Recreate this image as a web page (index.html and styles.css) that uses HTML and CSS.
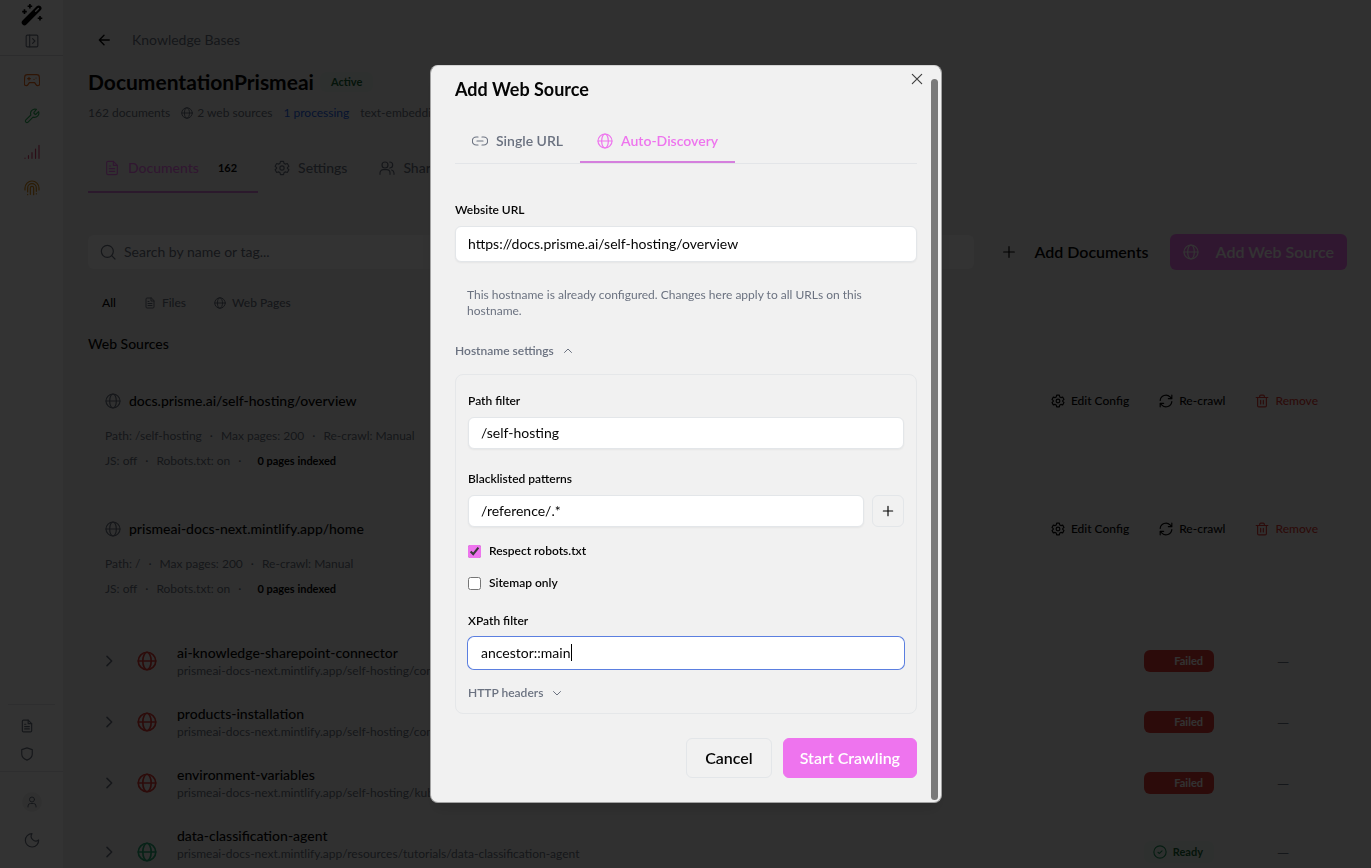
FILE: index.html
```html
<!DOCTYPE html>
<html lang="en">
<head>
<meta charset="utf-8">
<meta name="viewport" content="width=device-width, initial-scale=1">
<title>DocumentationPrismeai – Knowledge Bases</title>
<link rel="stylesheet" href="styles.css">
</head>
<body>
<svg class="sprite" aria-hidden="true">
  <symbol id="globe" viewBox="0 0 24 24"><circle cx="12" cy="12" r="10.5"/><ellipse cx="12" cy="12" rx="5" ry="10.5"/><path d="M1.500 12h21"/></symbol>
  <symbol id="file" viewBox="0 0 24 24"><path d="M14 2H6a2 2 0 0 0-2 2v16a2 2 0 0 0 2 2h12a2 2 0 0 0 2-2V8z"/><path d="M14 2v6h6M8 9h2M8 13h8M8 17h8"/></symbol>
  <symbol id="gear" viewBox="0 0 24 24"><path d="M9.700 2h4.600l.7 3 2 1.200 3-.9 2.300 4-2.200 2.100v1.200l2.200 2.100-2.300 4-3-.9-2 1.200-.7 3H9.700L9 19l-2-1.200-3 .9-2.300-4 2.200-2.100v-1.200L1.700 9.300 4 5.300l3 .9L9 5z"/><circle cx="12" cy="12" r="3.200"/></symbol>
  <symbol id="users" viewBox="0 0 24 24"><circle cx="9" cy="7.500" r="4.500"/><path d="M1.500 21.500v-2a5 5 0 0 1 5-5h5a5 5 0 0 1 5 5v2M16 3a4.500 4.500 0 0 1 0 9M19 15a5 5 0 0 1 3.500 4.500v2"/></symbol>
  <symbol id="refresh" viewBox="0 0 24 24"><path d="M2 11a10 10 0 0 1 17-6l3 3M22 2v6h-6M22 13a10 10 0 0 1-17 6l-3-3M2 22v-6h6"/></symbol>
  <symbol id="trash" viewBox="0 0 24 24"><path d="M2 6h20M4.500 6v14a2 2 0 0 0 2 2h11a2 2 0 0 0 2-2V6M8 6V4a2 2 0 0 1 2-2h4a2 2 0 0 1 2 2v2M9.700 11v6M14.300 11v6"/></symbol>
  <symbol id="plus" viewBox="0 0 24 24"><path d="M12 4v16M4 12h16"/></symbol>
  <symbol id="chevron" viewBox="0 0 24 24"><path d="M9 5l7 7-7 7"/></symbol>
</svg>

<div class="app">
  <aside class="sidebar">
    <div class="side-head">
      <svg class="logo" viewBox="0 0 24 24" aria-label="Prisme.ai"><path d="M3.800 20.200L19.300 4.700" stroke="#000" stroke-width="6" stroke-linecap="round"/><path d="M16 8l3-3" stroke="#fff" stroke-width="1.600" stroke-linecap="round"/><path d="M9.700 0v5M7.200 2.500h5M3.800 5.800v5M1.300 8.300h5M20.700 13v5M18.200 15.500h5" stroke="#000" stroke-width="1.800"/></svg>
      <button class="icon-btn muted" type="button" aria-label="Expand sidebar"><svg class="ic s14" viewBox="0 0 24 24"><rect x="2" y="2" width="20" height="20" rx="2"/><path d="M8 2v20M13 8l4 4-4 4"/></svg></button>
    </div>
    <nav class="side-nav" aria-label="Products">
      <a href="#" class="c-orange" aria-label="Agents"><svg class="ic s16" viewBox="0 0 24 24"><path d="M5 4h14a4 4 0 0 1 4 4l.5 9a3 3 0 0 1-5.500 2L16 16H8l-2 3a3 3 0 0 1-5.500-2L1 8a4 4 0 0 1 4-4zM5.500 10h4M7.500 8v4M15 11h.1M18 9h.1"/></svg></a>
      <a href="#" class="c-green" aria-label="Builder"><svg class="ic s16" viewBox="0 0 24 24"><path d="M15 6.500a1 1 0 0 0 0 1.400L16.500 9.400a1 1 0 0 0 1.400 0l4-4a6.500 6.500 0 0 1-8.400 8.300l-7.400 7.500a2.300 2.300 0 0 1-3.300-3.300l7.500-7.400a6.500 6.500 0 0 1 8.300-8.400z"/></svg></a>
      <a href="#" class="c-pink" aria-label="Insights"><svg class="ic s16" viewBox="0 0 24 24"><path d="M1.500 21v.5M6.700 17.500v4M12 13v8.500M17.300 7.500v14M22.500 2v19.500"/></svg></a>
      <a href="#" class="c-amber" aria-label="Governance"><svg class="ic s16" viewBox="0 0 24 24"><path d="M1.500 15v-3a10.500 10.500 0 0 1 21 0v3M5.500 18v-6a6.500 6.500 0 0 1 13 0v5M9.500 21.500V12a2.500 2.500 0 0 1 5 0v10M5.500 21.500v.5M18.500 20.500v.5"/></svg></a>
    </nav>
    <div class="side-links">
      <a href="#" aria-label="Documentation"><svg class="ic s14"><use href="#file"/></svg></a>
      <a href="#" aria-label="Privacy"><svg class="ic s14" viewBox="0 0 24 24"><path d="M12 1.500l9 3v8c0 5-4 8-9 10-5-2-9-5-9-10v-8z"/></svg></a>
    </div>
    <div class="side-foot">
      <button class="avatar" type="button" aria-label="Account"><svg class="ic s12" viewBox="0 0 24 24"><circle cx="12" cy="7" r="5"/><path d="M4 22v-2a5 5 0 0 1 5-5h6a5 5 0 0 1 5 5v2"/></svg></button>
      <button class="icon-btn" type="button" aria-label="Dark mode"><svg class="ic s16" viewBox="0 0 24 24"><path d="M12 2.500a7 7 0 0 0 10 9.500A10 10 0 1 1 12 2.500z"/></svg></button>
    </div>
  </aside>

  <main class="main">
    <div class="crumb"><button class="back" type="button" aria-label="Back"><svg class="ic s14 bold" viewBox="0 0 24 24"><path d="M21 12H4M12 4l-8 8 8 8"/></svg></button><span>Knowledge Bases</span></div>
    <div class="head"><h1>DocumentationPrismeai</h1><span class="badge badge-active">Active</span></div>
    <div class="facts"><span>162 documents</span><span class="with-icon"><svg class="ic s12"><use href="#globe"/></svg>2 web sources</span><span class="blue">1 processing</span><span>text-embedding-ada</span></div>

    <div class="tabs main-tabs" role="tablist">
      <button class="tab tab-on" role="tab" type="button"><svg class="ic s16"><use href="#file"/></svg>Documents<span class="count">162</span></button>
      <button class="tab" role="tab" type="button"><svg class="ic s16"><use href="#gear"/></svg>Settings</button>
      <button class="tab" role="tab" type="button"><svg class="ic s16"><use href="#users"/></svg>Share</button>
    </div>

    <div class="toolbar">
      <label class="search"><svg class="ic s16" viewBox="0 0 24 24"><circle cx="11" cy="11" r="9"/><path d="M17.500 17.500L22.500 22.500"/></svg><input type="search" placeholder="Search by name or tag..." aria-label="Search by name or tag"></label>
      <button class="btn-tool" type="button"><svg class="ic s16"><use href="#plus"/></svg>Add Documents</button>
      <button class="btn-tool btn-pink" type="button"><svg class="ic s16"><use href="#globe"/></svg>Add Web Source</button>
    </div>

    <div class="filters">
      <button class="on" type="button">All</button>
      <button type="button"><svg class="ic s12"><use href="#file"/></svg>Files</button>
      <button type="button"><svg class="ic s12"><use href="#globe"/></svg>Web Pages</button>
    </div>

    <h2>Web Sources</h2>
    <section class="cards">
      <article class="card">
        <div class="card-top">
          <h3><svg class="ic s16"><use href="#globe"/></svg>docs.prisme.ai/self-hosting/overview</h3>
          <div class="card-actions">
            <button type="button"><svg class="ic s14"><use href="#gear"/></svg>Edit Config</button>
            <button type="button"><svg class="ic s14"><use href="#refresh"/></svg>Re-crawl</button>
            <button class="danger" type="button"><svg class="ic s14"><use href="#trash"/></svg>Remove</button>
          </div>
        </div>
        <div class="meta"><span>Path: /self-hosting</span><span>·</span><span>Max pages: 200</span><span>·</span><span>Re-crawl: Manual</span></div>
        <div class="meta"><span>JS: off</span><span>·</span><span>Robots.txt: on</span><span>·</span><span class="indexed">0 pages indexed</span></div>
      </article>
      <article class="card">
        <div class="card-top">
          <h3><svg class="ic s16"><use href="#globe"/></svg>prismeai-docs-next.mintlify.app/home</h3>
          <div class="card-actions">
            <button type="button"><svg class="ic s14"><use href="#gear"/></svg>Edit Config</button>
            <button type="button"><svg class="ic s14"><use href="#refresh"/></svg>Re-crawl</button>
            <button class="danger" type="button"><svg class="ic s14"><use href="#trash"/></svg>Remove</button>
          </div>
        </div>
        <div class="meta"><span>Path: /</span><span>·</span><span>Max pages: 200</span><span>·</span><span>Re-crawl: Manual</span></div>
        <div class="meta"><span>JS: off</span><span>·</span><span>Robots.txt: on</span><span>·</span><span class="indexed">0 pages indexed</span></div>
      </article>
    </section>

    <ul class="docs">
      <li class="doc"><svg class="ic s16 caret"><use href="#chevron"/></svg><svg class="ic s20 red"><use href="#globe"/></svg><div class="doc-text"><h4>ai-knowledge-sharepoint-connector</h4><p>prismeai-docs-next.mintlify.app/self-hosting/connectors</p></div><span class="badge status failed">Failed</span><span class="dash">—</span></li>
      <li class="doc"><svg class="ic s16 caret"><use href="#chevron"/></svg><svg class="ic s20 red"><use href="#globe"/></svg><div class="doc-text"><h4>products-installation</h4><p>prismeai-docs-next.mintlify.app/self-hosting/configuration</p></div><span class="badge status failed">Failed</span><span class="dash">—</span></li>
      <li class="doc"><svg class="ic s16 caret"><use href="#chevron"/></svg><svg class="ic s20 red"><use href="#globe"/></svg><div class="doc-text"><h4>environment-variables</h4><p>prismeai-docs-next.mintlify.app/self-hosting/kubernetes</p></div><span class="badge status failed">Failed</span><span class="dash">—</span></li>
      <li class="doc doc-tall"><svg class="ic s16 caret"><use href="#chevron"/></svg><svg class="ic s20 green"><use href="#globe"/></svg><div class="doc-text"><h4>data-classification-agent</h4><p>prismeai-docs-next.mintlify.app/resources/tutorials/data-classification-agent</p></div><span class="badge status ready"><svg class="ic s14" viewBox="0 0 24 24"><circle cx="12" cy="12" r="10.500"/><path d="M8.500 12.500l2.500 2 4.500-4.500"/></svg>Ready</span><span class="dash">—</span></li>
    </ul>
  </main>
</div>

<div class="overlay">
  <form class="modal" role="dialog" aria-modal="true" aria-labelledby="dlg-title">
    <button class="close" type="button" aria-label="Close"><svg class="ic s16" viewBox="0 0 24 24"><path d="M5 5l14 14M19 5L5 19"/></svg></button>
    <span class="thumb"></span>
    <h2 class="modal-title" id="dlg-title">Add Web Source</h2>
    <div class="tabs modal-tabs" role="tablist">
      <button class="tab" role="tab" type="button"><svg class="ic s16" viewBox="0 0 24 24"><path d="M9 6H6.500a6 6 0 0 0 0 12H9M15 6h2.500a6 6 0 0 1 0 12H15M7.500 12h9"/></svg>Single URL</button>
      <button class="tab tab-on" role="tab" type="button"><svg class="ic s16"><use href="#globe"/></svg>Auto-Discovery</button>
    </div>
    <label class="label first" for="url">Website URL</label>
    <input class="field field-lg" id="url" type="text" value="https://docs.prisme.ai/self-hosting/overview">
    <p class="notice">This hostname is already configured. Changes here apply to all URLs on this hostname.</p>
    <button class="toggle" type="button" aria-expanded="true">Hostname settings<svg class="ic s12 up"><use href="#chevron"/></svg></button>
    <div class="panel">
      <label class="label" for="path">Path filter</label>
      <input class="field" id="path" type="text" value="/self-hosting">
      <label class="label spaced" for="black">Blacklisted patterns</label>
      <div class="pattern"><input class="field" id="black" type="text" value="/reference/.*"><button class="add" type="button" aria-label="Add pattern"><svg class="ic s14"><use href="#plus"/></svg></button></div>
      <label class="check"><input type="checkbox" checked>Respect robots.txt</label>
      <label class="check"><input type="checkbox">Sitemap only</label>
      <label class="label spaced" for="xpath">XPath filter</label>
      <div class="focus-wrap"><input class="field focused" id="xpath" type="text" value="ancestor::main"><span class="text-caret"></span></div>
      <button class="toggle" type="button" aria-expanded="false">HTTP headers<svg class="ic s12 down"><use href="#chevron"/></svg></button>
    </div>
    <div class="modal-foot"><button class="btn" type="button">Cancel</button><button class="btn btn-primary" type="submit">Start Crawling</button></div>
  </form>
</div>
</body>
</html>
```
FILE: styles.css
```css
* { box-sizing: border-box; }
html, body { height: 100%; }
body { margin: 0; font: 400 14px/20px Lato, "Liberation Sans", sans-serif; color: #050505; background: #f1f1f1; overflow: hidden; }
h1, h2, h3, h4, p, ul { margin: 0; padding: 0; }
button { font: inherit; color: inherit; background: none; border: 0; padding: 0; display: inline-flex; align-items: center; justify-content: center; cursor: pointer; white-space: nowrap; }
input { font: inherit; color: inherit; }
a { color: inherit; display: flex; }

.sprite { display: none; }
.ic { fill: none; stroke: currentColor; stroke-width: 2; stroke-linecap: round; stroke-linejoin: round; flex: none; }
.s12 { width: 12px; height: 12px; }
.s14 { width: 14px; height: 14px; }
.s16 { width: 16px; height: 16px; stroke-width: 1.8; }
.s20 { width: 20px; height: 20px; }
.bold { stroke-width: 2.4; }

.app { display: flex; height: 100vh; overflow: hidden; }
.sidebar { width: 63px; flex: none; display: flex; flex-direction: column; background: #fff; color: #6b7280; }
.side-head { display: flex; flex-direction: column; align-items: center; gap: 8px; padding: 4px 0 7px; border-bottom: 1px solid #d9dce1; }
.logo { width: 22px; height: 22px; fill: none; }
.side-nav { flex: 1; display: flex; flex-direction: column; align-items: center; gap: 20px; padding-top: 16px; }
.side-links { margin: 0 8px; display: flex; flex-direction: column; gap: 14px; padding: 14px 12px 10px; border-top: 1px solid #e5e7eb; }
.side-foot { display: flex; flex-direction: column; align-items: center; gap: 20px; padding: 20px 0; border-top: 1px solid #e5e7eb; }
.avatar { width: 20px; height: 20px; border-radius: 50%; background: #f1f1f1; }
.c-orange { color: #ea6a1c; }
.c-green { color: #2fae5c; }
.c-pink { color: #d8416f; }
.c-amber { color: #d98a14; }

.main { flex: 1; min-width: 0; padding: 30px 24px 0 25px; }
.crumb { display: flex; align-items: center; gap: 12px; color: #6b7280; }
.back { width: 32px; color: #050505; }
.head { display: flex; align-items: center; gap: 6px; margin-top: 18px; }
h1 { font-size: 21px; line-height: 28px; font-weight: 700; }
.badge { display: inline-flex; align-items: center; font-size: 11px; line-height: 20px; font-weight: 700; border-radius: 6px; padding: 0 11px; }
.badge-active { color: #166534; background: #e6f0ea; }
.facts { display: flex; gap: 11px; margin-top: 9px; font-size: 12px; line-height: 16px; color: #6b7280; white-space: nowrap; }
.with-icon { display: inline-flex; align-items: center; gap: 4px; }
.blue { color: #2563eb; }

.tabs { display: flex; }
.tab { position: relative; gap: 8px; padding: 0 17px; font-weight: 600; color: #6b7280; }
.tab-on { color: #ee74ee; }
.tab-on::after { content: ""; position: absolute; left: 0; right: 0; bottom: 0; height: 2px; background: #d57fdd; }
.main-tabs { height: 48px; margin-top: 24px; }
.main-tabs .tab { padding: 0 16px 2px; font-weight: 500; }
.count { font-size: 11px; font-weight: 700; color: #050505; padding: 0 5px 0 11px; }

.toolbar { display: flex; gap: 8px; align-items: center; margin-top: 41px; }
.search { flex: 1; height: 34px; display: flex; align-items: center; gap: 8px; padding: 0 12px; background: #fff; border-radius: 6px; color: #6b7280; }
.search input { flex: 1; border: 0; outline: 0; background: none; padding: 0; }
.search input::placeholder { color: #6b7280; opacity: 1; }
.btn-tool { height: 36px; padding: 0 13px 0 19px; gap: 17px; font-size: 16px; font-weight: 600; border-radius: 6px; }
.btn-pink { padding: 0 13px; background: #ee74ee; color: #fff; }

.filters { display: flex; margin-top: 25px; font-size: 12px; line-height: 16px; font-weight: 500; color: #6b7280; }
.filters button { padding: 0 14px; gap: 6px; }
.filters .on { color: #050505; }
.main h2 { margin-top: 23px; font-size: 14px; line-height: 20px; font-weight: 500; }

.cards { display: flex; flex-direction: column; gap: 16px; margin-top: 20px; }
.card { padding: 17px; }
.card-top { display: flex; justify-content: space-between; align-items: center; margin-bottom: 17px; }
h3 { display: flex; align-items: center; gap: 8px; font-size: 14px; line-height: 20px; font-weight: 500; }
h3 .ic { color: #6b7280; }
.card-actions { display: flex; gap: 6px; font-size: 12px; line-height: 16px; font-weight: 500; }
.card-actions button { padding: 0 12px; gap: 6px; }
.danger, .red { color: #dc3a34; }
.green { color: #26a873; }
.meta { display: flex; gap: 8px; font-size: 12px; line-height: 16px; color: #6b7280; }
.meta + .meta { margin-top: 9px; }
.indexed { font-size: 11px; font-weight: 700; color: #050505; padding-left: 8px; }

.docs { list-style: none; margin-top: 17px; }
.doc { display: flex; align-items: center; padding: 12px 0 12px 13px; border-bottom: 1px solid transparent; }
.caret { margin-right: 20px; color: #6b7280; stroke-width: 2.4; }
.doc-text { flex: 1; min-width: 0; margin-left: 20px; }
h4 { font-size: 14px; line-height: 20px; font-weight: 500; }
.doc-text p { font-size: 12px; line-height: 16px; color: #6b7280; }
.doc-tall .doc-text { padding-bottom: 16px; }
.status { width: 70px; line-height: 22px; justify-content: flex-end; gap: 6px; }
.failed { background: #dc3a34; color: #fafafa; }
.ready { background: #e6f0ea; color: #166534; }
.ready .ic { color: #22915c; }
.dash { width: 133px; padding-left: 5px; text-align: center; font-size: 16px; color: #6b7280; }

.overlay { position: fixed; inset: 0; padding-left: 1px; display: flex; align-items: center; justify-content: center; background: rgba(0, 0, 0, .8); }
.modal { position: relative; width: 512px; max-width: 100%; padding: 14px 24px 24px; background: #f1f1f1; border: 1px solid #a3a3a3; border-top-color: #d4d4d4; border-radius: 8px; box-shadow: 0 10px 15px rgba(0, 0, 0, .1); }
.close { position: absolute; top: 5px; right: 16px; color: #404040; }
.thumb { position: absolute; top: 13px; right: 3px; bottom: 2px; width: 7px; border-radius: 4px; background: #7a7a7a; }
.modal-title { font-size: 18px; line-height: 18px; font-weight: 700; }
.modal-tabs { height: 45px; margin-top: 21px; border-bottom: 1px solid #e3e5e8; }
.label { display: block; font-size: 12px; line-height: 16px; font-weight: 600; margin-bottom: 8px; }
.first { margin-top: 38px; }
.spaced { margin-top: 22px; }
.field { display: block; width: 100%; height: 32px; padding: 0 12px 2px; background: #fff; border: 1px solid #e3e6e9; border-radius: 6px; outline: 0; box-shadow: 0 1px 2px rgba(0, 0, 0, .05); }
.field-lg { height: 36px; }
.notice { margin-top: 25px; padding: 0 12px; font-size: 12px; line-height: 16px; color: #6b7280; }
.toggle { display: flex; gap: 8px; margin-top: 24px; font-size: 12px; line-height: 16px; font-weight: 600; color: #6b7280; }
.up { transform: rotate(-90deg); }
.down { transform: rotate(90deg); }
.panel { margin-top: 15px; padding: 18px 12px 12px; border: 1px solid #e5e7e9; border-radius: 8px; }
.pattern { display: flex; gap: 8px; }
.pattern .field { flex: 1; min-width: 0; }
.add { width: 32px; height: 32px; border: 1px solid #e3e6e9; border-radius: 6px; }
.check { display: flex; align-items: center; gap: 8px; margin-top: 16px; font-size: 12px; line-height: 16px; font-weight: 600; }
.check input { width: 13px; height: 13px; margin: 0; accent-color: #ee74ee; }
.focus-wrap { position: relative; }
.focused { border-color: #fff; box-shadow: 0 0 0 1px #5b7fe0; }
.text-caret { position: absolute; left: 103px; top: 7px; width: 1px; height: 17px; background: #000; }
.panel .toggle { margin-top: 16px; }
.modal-foot { display: flex; justify-content: flex-end; gap: 11px; margin-top: 24px; }
.btn { height: 40px; padding: 0 18px; border: 1px solid #e3e6e9; border-radius: 6px; font-size: 16px; font-weight: 600; }
.btn-primary { padding: 0 16px; border-color: #ee74ee; background: #ee74ee; color: #fff; }
```
